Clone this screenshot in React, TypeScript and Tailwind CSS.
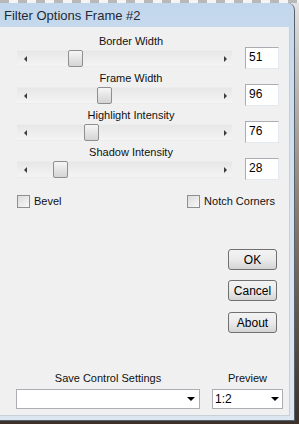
const font = { fontFamily: '"Liberation Sans", Arial, sans-serif' };

const sliders = [
  { label: "Border Width", value: "51", thumb: "left-[51px]" },
  { label: "Frame Width", value: "96", thumb: "left-[80px]" },
  { label: "Highlight Intensity", value: "76", thumb: "left-[67px]" },
  { label: "Shadow Intensity", value: "28", thumb: "left-[36px]" },
];

const Slider = ({ label, value, thumb }: { label: string; value: string; thumb: string }) => {
  return (
    <div className="flex flex-col">
      <div className="h-[15px] w-[228px] flex items-end justify-center text-[11px] leading-[12px] text-[#111]">
        {label}
      </div>
      <div className="flex items-center gap-[13px] h-[22px]">
        <div className="relative w-[215px] h-[17px] bg-gradient-to-b from-[#e7e7e7] to-[#f4f4f4] border-y border-[#ececec]">
          <div className="absolute left-[7px] top-[5px] w-0 h-0 border-y-[3px] border-y-transparent border-r-[3px] border-r-[#3c3c3c]" />
          <div className="absolute left-[207px] top-[5px] w-0 h-0 border-y-[3px] border-y-transparent border-l-[3px] border-l-[#3c3c3c]" />
          <div
            className={`absolute top-[-1px] w-[15px] h-[17px] rounded-[2px] border border-[#8e8f8f] bg-gradient-to-b from-[#f6f6f6] to-[#d4d4d4] ${thumb}`}
          />
        </div>
        <div className="w-[34px] h-[22px] bg-white border border-[#abadb3] border-r-[#e3e9ef] border-b-[#e3e9ef] pl-[3px] pt-[2px] text-[12px] leading-[14px] text-black">
          {value}
        </div>
      </div>
    </div>
  );
};

const Check = ({ label }: { label: string }) => (
  <label className="flex items-center gap-[4px] text-[11px] text-[#111]">
    <span className="w-[13px] h-[13px] border border-[#8e8f8f] bg-gradient-to-br from-[#dcdcdc] to-[#f8f8f8]" />
    {label}
  </label>
);

const Button = ({ children, className = "" }: { children: string; className?: string }) => (
  <button
    className={`w-[49px] h-[21px] rounded-[3px] border border-[#707070] bg-gradient-to-b from-[#f3f3f3] via-[#ebebeb] to-[#d4d4d4] text-[12px] leading-[18px] text-black ${className}`}
  >
    {children}
  </button>
);

const Caret = () => <div className="w-0 h-0 border-x-[4px] border-x-transparent border-t-[4px] border-t-black" />;

const App = () => {
  return (
    <div
      className="w-[299px] h-[424px] overflow-hidden flex flex-col bg-gradient-to-b from-[#e4e4e4] via-[#8a7b6d] to-[#3b3129]"
      style={font}
    >
      <div className="h-[3px] shrink-0 bg-[repeating-linear-gradient(90deg,#b8b8b8_0_9px,#f4f4f4_9px_18px)]" />
      <div className="w-[295px] h-[418px] shrink-0 flex flex-col rounded-tr-[7px] border-r border-b border-[#56636f] bg-gradient-to-b from-[#c3d7ec] via-[#d6e3f0] to-[#dce6f0]">
        <div className="h-[24px] shrink-0 flex items-center pl-[4px] pt-[1px] text-[13px] text-[#1f2a36]">
          Filter Options Frame #2
        </div>
        <div className="flex-1 mr-[4px] mb-[4px] bg-[#f0f0f0] border-r border-b border-[#c7cfd8] flex flex-col">
          <div className="flex flex-col pl-[17px] pt-[5px]">
            {sliders.map((s) => (
              <Slider key={s.label} {...s} />
            ))}
          </div>
          <div className="flex justify-between pl-[17px] pr-[14px] mt-[15px] h-[13px]">
            <Check label="Bevel" />
            <Check label="Notch Corners" />
          </div>
          <div className="flex flex-col gap-[10px] self-end mr-[12px] mt-[41px]">
            <Button>OK</Button>
            <Button>Cancel</Button>
            <Button className="mt-px">About</Button>
          </div>
          <div className="mt-auto flex gap-[12px] pl-[16px] pb-[6px]">
            <div className="flex flex-col w-[184px]">
              <div className="text-center text-[11px] leading-[13px] mb-[4px] text-[#111]">Save Control Settings</div>
              <div className="h-[20px] bg-white border border-[#abadb3] flex items-center justify-end pr-[4px]">
                <Caret />
              </div>
            </div>
            <div className="flex flex-col w-[71px]">
              <div className="text-center text-[11px] leading-[13px] mb-[4px] text-[#111]">Preview</div>
              <div className="h-[20px] bg-white border border-[#abadb3] flex items-center justify-between pl-[2px] pr-[3px] text-[12px]">
                1:2
                <Caret />
              </div>
            </div>
          </div>
        </div>
      </div>
    </div>
  );
};

export default App;
